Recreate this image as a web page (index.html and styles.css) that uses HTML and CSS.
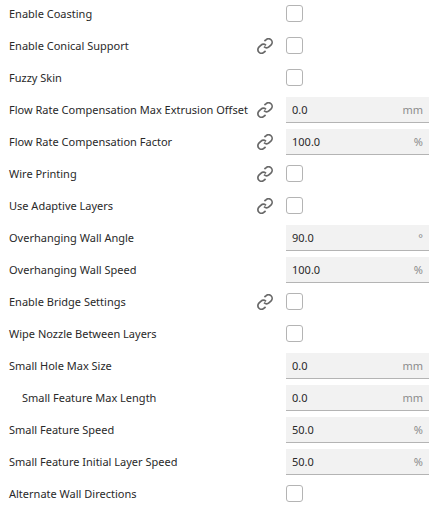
FILE: index.html
```html
<!DOCTYPE html>
<html lang="en">

<head>
    <meta charset="UTF-8">
    <meta name="viewport" content="width=device-width, initial-scale=1.0">
    <title>Experimental Settings</title>
    <link rel="stylesheet" href="styles.css">
</head>

<body>

    <svg class="icon-defs" aria-hidden="true">
        <symbol id="link" viewBox="0 0 16 16">
            <path d="M7.4 3L8.9 1.8A3.6 3.6 0 0 1 14.1 6.9L12.2 8.7A3.8 3.8 0 0 1 7 8.7"/>
            <path d="M8.6 13L7.1 14.2A3.6 3.6 0 0 1 1.9 9.1L3.8 7.3A3.8 3.8 0 0 1 9 7.3"/>
        </symbol>
    </svg>

    <form class="settings">
        <div class="setting">
            <label for="coasting">Enable Coasting</label>
            <div class="control"><input type="checkbox" id="coasting"></div>
        </div>
        <div class="setting">
            <label for="conical">Enable Conical Support</label>
            <svg class="link-icon"><use href="#link"/></svg>
            <div class="control"><input type="checkbox" id="conical"></div>
        </div>
        <div class="setting">
            <label for="fuzzy">Fuzzy Skin</label>
            <div class="control"><input type="checkbox" id="fuzzy"></div>
        </div>
        <div class="setting">
            <label for="flowOffset">Flow Rate Compensation Max Extrusion Offset</label>
            <svg class="link-icon"><use href="#link"/></svg>
            <div class="control field"><input type="text" id="flowOffset" value="0.0"><span class="unit">mm</span></div>
        </div>
        <div class="setting">
            <label for="flowFactor">Flow Rate Compensation Factor</label>
            <svg class="link-icon"><use href="#link"/></svg>
            <div class="control field"><input type="text" id="flowFactor" value="100.0"><span class="unit">%</span></div>
        </div>
        <div class="setting">
            <label for="wire">Wire Printing</label>
            <svg class="link-icon"><use href="#link"/></svg>
            <div class="control"><input type="checkbox" id="wire"></div>
        </div>
        <div class="setting">
            <label for="adaptive">Use Adaptive Layers</label>
            <svg class="link-icon"><use href="#link"/></svg>
            <div class="control"><input type="checkbox" id="adaptive"></div>
        </div>
        <div class="setting">
            <label for="wallAngle">Overhanging Wall Angle</label>
            <div class="control field"><input type="text" id="wallAngle" value="90.0"><span class="unit">°</span></div>
        </div>
        <div class="setting">
            <label for="wallSpeed">Overhanging Wall Speed</label>
            <div class="control field"><input type="text" id="wallSpeed" value="100.0"><span class="unit">%</span></div>
        </div>
        <div class="setting">
            <label for="bridge">Enable Bridge Settings</label>
            <svg class="link-icon"><use href="#link"/></svg>
            <div class="control"><input type="checkbox" id="bridge"></div>
        </div>
        <div class="setting">
            <label for="wipe">Wipe Nozzle Between Layers</label>
            <div class="control"><input type="checkbox" id="wipe"></div>
        </div>
        <div class="setting">
            <label for="holeSize">Small Hole Max Size</label>
            <div class="control field"><input type="text" id="holeSize" value="0.0"><span class="unit">mm</span></div>
        </div>
        <div class="setting child">
            <label for="featureLength">Small Feature Max Length</label>
            <div class="control field"><input type="text" id="featureLength" value="0.0"><span class="unit">mm</span></div>
        </div>
        <div class="setting">
            <label for="featureSpeed">Small Feature Speed</label>
            <div class="control field"><input type="text" id="featureSpeed" value="50.0"><span class="unit">%</span></div>
        </div>
        <div class="setting">
            <label for="initialSpeed">Small Feature Initial Layer Speed</label>
            <div class="control field"><input type="text" id="initialSpeed" value="50.0"><span class="unit">%</span></div>
        </div>
        <div class="setting">
            <label for="alternate">Alternate Wall Directions</label>
            <div class="control"><input type="checkbox" id="alternate"></div>
        </div>
    </form>

</body>

</html>
```
FILE: styles.css
```css
:root {
    --text-color: #292929;
    --unit-color: #8c8c8c;
    --field-color: #f2f2f2;
    --border-color: #b4b4b4;
    --icon-color: #686868;
}

* {
    box-sizing: border-box;
}

body {
    margin: 0;
    background-color: #fff;
    color: var(--text-color);
    font-family: "Noto Sans", sans-serif;
    font-size: 11px;
}

.icon-defs {
    display: none;
}

.settings {
    display: flex;
    flex-direction: column;
    gap: 6px;
    padding: 1px 6px 0 9px;
}

.setting {
    display: flex;
    align-items: center;
    height: 26px;
}

.setting label {
    flex: 1;
    padding-bottom: 2px;
    white-space: nowrap;
}

.child {
    padding-left: 13px;
}

.link-icon {
    width: 16px;
    height: 16px;
    margin-right: 13px;
    fill: none;
    stroke: var(--icon-color);
    stroke-width: 1.7;
    overflow: visible;
}

.control {
    display: flex;
    width: 143px;
    height: 26px;
    padding-top: 4px;
}

.field {
    align-items: center;
    padding: 0 6px;
    background-color: var(--field-color);
    border-bottom: 1px solid var(--border-color);
}

.field input {
    flex: 1;
    min-width: 0;
    padding: 0;
    border: none;
    outline: none;
    background: none;
    color: inherit;
    font: inherit;
}

.unit {
    color: var(--unit-color);
}

input[type="checkbox"] {
    appearance: none;
    width: 17px;
    height: 17px;
    margin: 0;
    background-color: #fff;
    border: 1px solid var(--border-color);
    border-radius: 3px;
}

input[type="checkbox"]:checked {
    background-color: var(--icon-color);
}
```
